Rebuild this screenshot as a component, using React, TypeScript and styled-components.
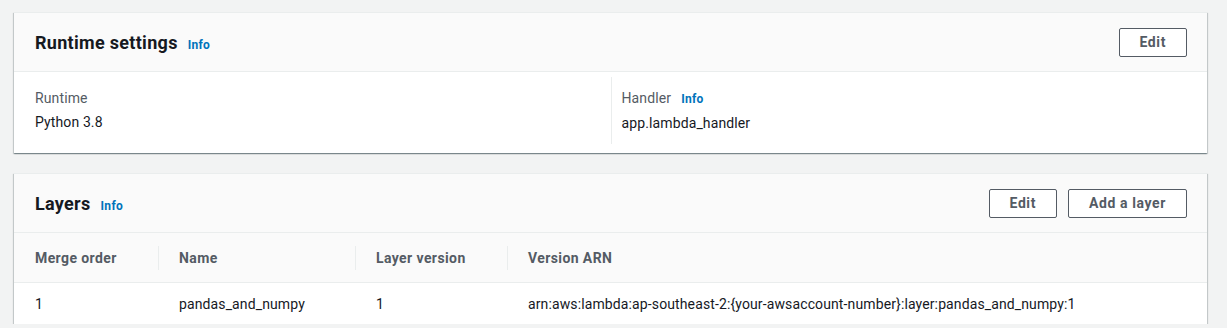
import * as React from 'react';
import styled, { createGlobalStyle } from 'styled-components';

const GlobalStyle = createGlobalStyle`
  html, body {
    margin: 0;
    padding: 0;
    background: #f2f3f3;
    font-family: Roboto, 'Liberation Sans', sans-serif;
    letter-spacing: 0.12px;
    color: #16191f;
  }
`;

const Page = styled.div`
  display: flex;
  flex-direction: column;
  gap: 20px;
  padding: 12px 20px 0 14px;
`;

const Card = styled.section`
  background: #ffffff;
  border-top: 1px solid #eaeded;
  box-shadow: 0 1px 1px 0 rgba(0, 28, 36, 0.3), 1px 1px 1px 0 rgba(0, 28, 36, 0.15),
    -1px 1px 1px 0 rgba(0, 28, 36, 0.15);
`;

const CardHeader = styled.header`
  display: flex;
  align-items: center;
  justify-content: space-between;
  height: 58px;
  padding: 0 20px 0 21px;
  background: #fafafa;
  border-bottom: 1px solid #eaeded;
`;

const Title = styled.h2`
  display: flex;
  align-items: baseline;
  gap: 10px;
  margin: 0;
  font-size: 18px;
  font-weight: 700;
  letter-spacing: 0.3px;
  color: #16191f;
`;

const InfoLink = styled.a`
  font-size: 12px;
  font-weight: 700;
  letter-spacing: 0.3px;
  color: #0073bb;
  text-decoration: none;
  cursor: pointer;
`;

const Actions = styled.div`
  display: flex;
  gap: 11px;
`;

const Button = styled.button`
  height: 29px;
  padding: 0 20px;
  background: #ffffff;
  border: 1px solid #545b64;
  border-radius: 2px;
  font-family: inherit;
  font-size: 14px;
  font-weight: 700;
  letter-spacing: 0.6px;
  color: #545b64;
  cursor: pointer;
`;

const Columns = styled.div`
  display: grid;
  grid-template-columns: 1fr 1fr;
  padding: 5px 0 9px;
`;

const Column = styled.div<{ $divider?: boolean }>`
  display: flex;
  flex-direction: column;
  gap: 4px;
  padding: 11px 21px 11px;
  border-left: ${(p) => (p.$divider ? '1px solid #eaeded' : 'none')};
  padding-left: ${(p) => (p.$divider ? '10px' : '21px')};
`;

const Label = styled.div`
  display: flex;
  align-items: baseline;
  gap: 10px;
  font-size: 14px;
  line-height: 20px;
  color: #545b64;
`;

const Value = styled.div`
  font-size: 14px;
  line-height: 20px;
  color: #16191f;
`;

const Table = styled.table`
  width: 100%;
  border-collapse: collapse;
  font-size: 14px;
`;

const Th = styled.th<{ $width?: number }>`
  width: ${(p) => (p.$width ? `${p.$width}px` : 'auto')};
  height: 49px;
  padding: 0;
  background: #fafafa;
  border-bottom: 1px solid #eaeded;
  text-align: left;
  font-weight: 700;
  letter-spacing: 0.4px;
  color: #545b64;
`;

const ThInner = styled.div<{ $divider?: boolean }>`
  display: flex;
  align-items: center;
  height: 24px;
  padding-left: ${(p) => (p.$divider ? '20px' : '21px')};
  border-left: ${(p) => (p.$divider ? '1px solid #eaeded' : 'none')};
`;

const Td = styled.td`
  height: 41px;
  padding: 0 0 0 21px;
  color: #16191f;
`;

const columns = [
  { title: 'Merge order', width: 144 },
  { title: 'Name', width: 197 },
  { title: 'Layer version', width: 152 },
  { title: 'Version ARN' },
];

const layers = [
  {
    order: '1',
    name: 'pandas_and_numpy',
    version: '1',
    arn: 'arn:aws:lambda:ap-southeast-2:{your-awsaccount-number}:layer:pandas_and_numpy:1',
  },
];

export default function App() {
  return (
    <>
      <GlobalStyle />
      <Page>
        <Card>
          <CardHeader>
            <Title>
              Runtime settings <InfoLink>Info</InfoLink>
            </Title>
            <Button>Edit</Button>
          </CardHeader>
          <Columns>
            <Column>
              <Label>Runtime</Label>
              <Value>Python 3.8</Value>
            </Column>
            <Column $divider>
              <Label>
                Handler <InfoLink>Info</InfoLink>
              </Label>
              <Value>app.lambda_handler</Value>
            </Column>
          </Columns>
        </Card>

        <Card>
          <CardHeader>
            <Title>
              Layers <InfoLink>Info</InfoLink>
            </Title>
            <Actions>
              <Button>Edit</Button>
              <Button>Add a layer</Button>
            </Actions>
          </CardHeader>
          <Table>
            <thead>
              <tr>
                {columns.map((c, i) => (
                  <Th key={c.title} $width={c.width}>
                    <ThInner $divider={i > 0}>{c.title}</ThInner>
                  </Th>
                ))}
              </tr>
            </thead>
            <tbody>
              {layers.map((l) => (
                <tr key={l.arn}>
                  <Td>{l.order}</Td>
                  <Td>{l.name}</Td>
                  <Td>{l.version}</Td>
                  <Td>{l.arn}</Td>
                </tr>
              ))}
            </tbody>
          </Table>
        </Card>
      </Page>
    </>
  );
}
